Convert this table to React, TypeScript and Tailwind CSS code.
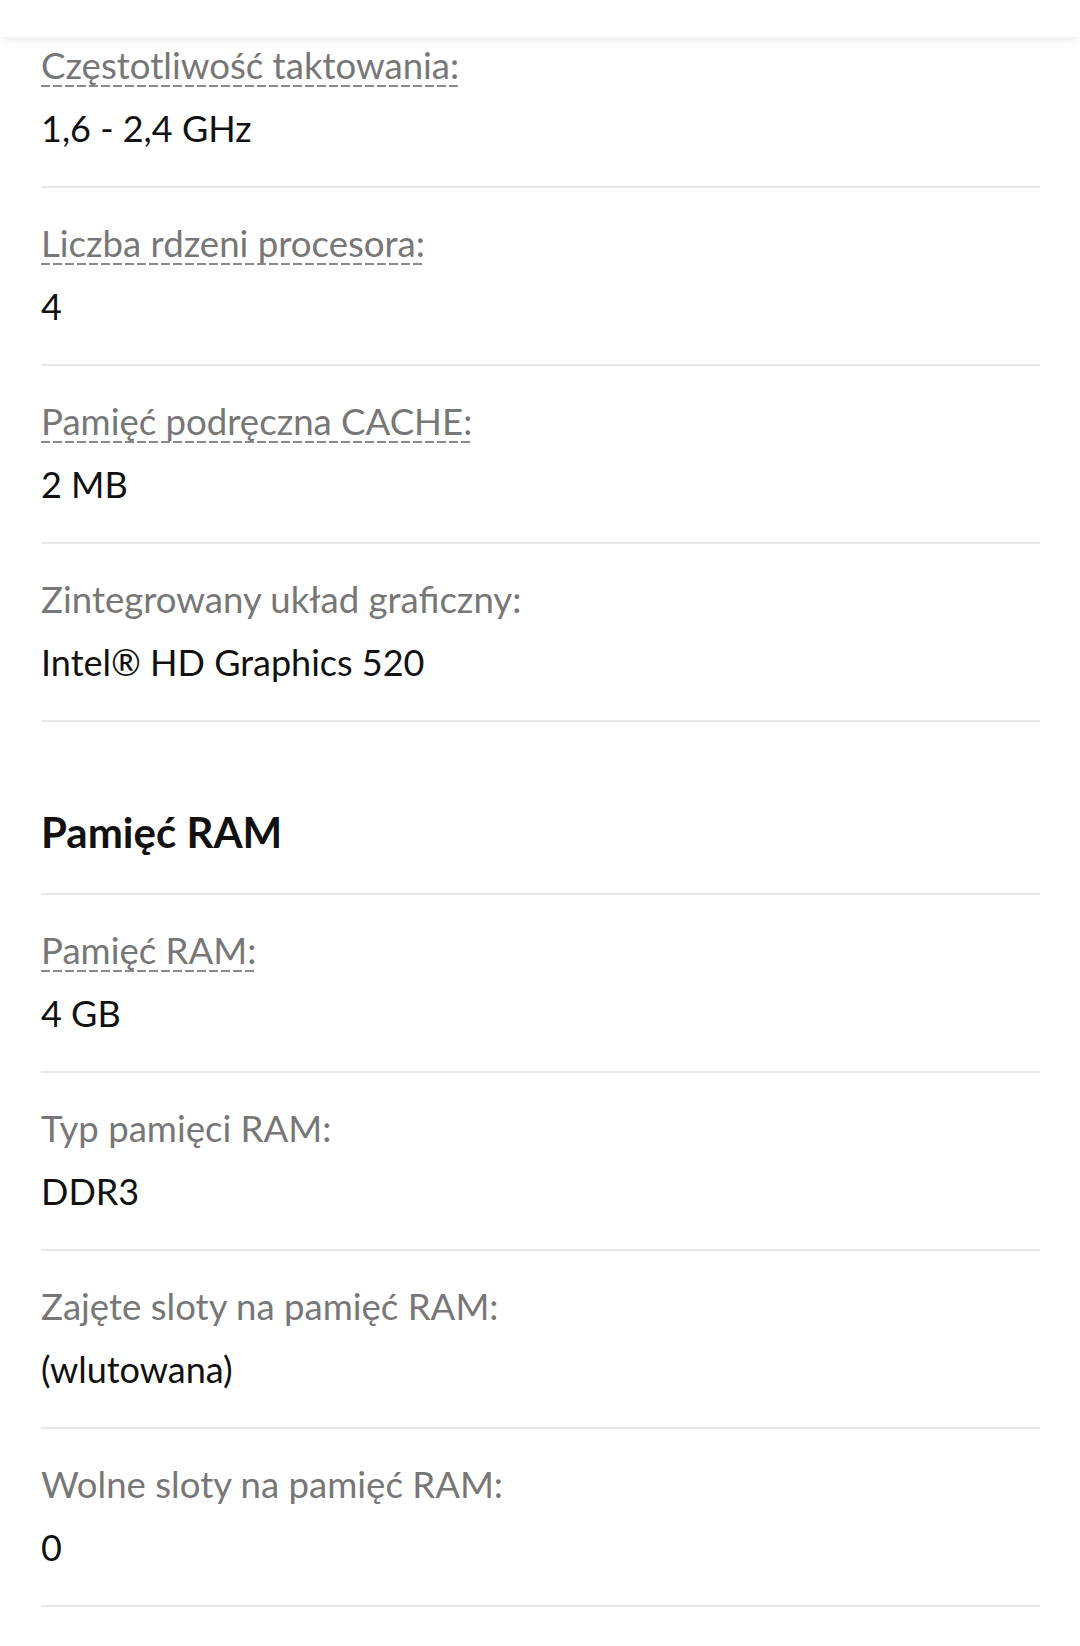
const font = { fontFamily: "Lato, 'Noto Sans', sans-serif" };

interface SpecRowProps {
  label: string;
  value: string;
  hint?: boolean;
  first?: boolean;
}

function SpecRow({ label, value, hint, first }: SpecRowProps) {
  return (
    <div
      className={
        "border-b-2 border-[#e8e8e8] pb-[33px] " + (first ? "pt-[5px]" : "pt-[32px]")
      }
    >
      <div className="h-[48px] text-[36.6px] leading-[47px] text-[#777777] whitespace-nowrap">
        {hint ? (
          <span className="bg-[repeating-linear-gradient(to_right,#8a8a8a_0_9px,transparent_9px_12px)] bg-[length:100%_2px] bg-bottom bg-no-repeat">
            {label}
          </span>
        ) : (
          label
        )}
      </div>
      <div className="mt-[15px] h-[48px] text-[36px] leading-[47px] text-[#111111] whitespace-nowrap">
        {value}
      </div>
    </div>
  );
}

function SectionTitle({ title }: { title: string }) {
  return (
    <div className="border-b-2 border-[#e8e8e8] pt-[84px] pb-[35px]">
      <h2 className="h-[52px] text-[42px] leading-[52px] font-bold text-[#111111]">
        {title}
      </h2>
    </div>
  );
}

export default function App() {
  return (
    <div className="min-h-[1646px] w-[1080px] bg-white" style={font}>
      <div className="relative z-10 h-[37px] bg-white shadow-[0_2px_10px_rgba(0,0,0,0.09)]" />
      <div className="pl-[41px] pr-[40px]">
        <SpecRow first hint label="Częstotliwość taktowania:" value="1,6 - 2,4 GHz" />
        <SpecRow hint label="Liczba rdzeni procesora:" value="4" />
        <SpecRow hint label="Pamięć podręczna CACHE:" value="2 MB" />
        <SpecRow label="Zintegrowany układ graficzny:" value="Intel® HD Graphics 520" />
        <SectionTitle title="Pamięć RAM" />
        <SpecRow hint label="Pamięć RAM:" value="4 GB" />
        <SpecRow label="Typ pamięci RAM:" value="DDR3" />
        <SpecRow label="Zajęte sloty na pamięć RAM:" value="(wlutowana)" />
        <SpecRow label="Wolne sloty na pamięć RAM:" value="0" />
      </div>
    </div>
  );
}
